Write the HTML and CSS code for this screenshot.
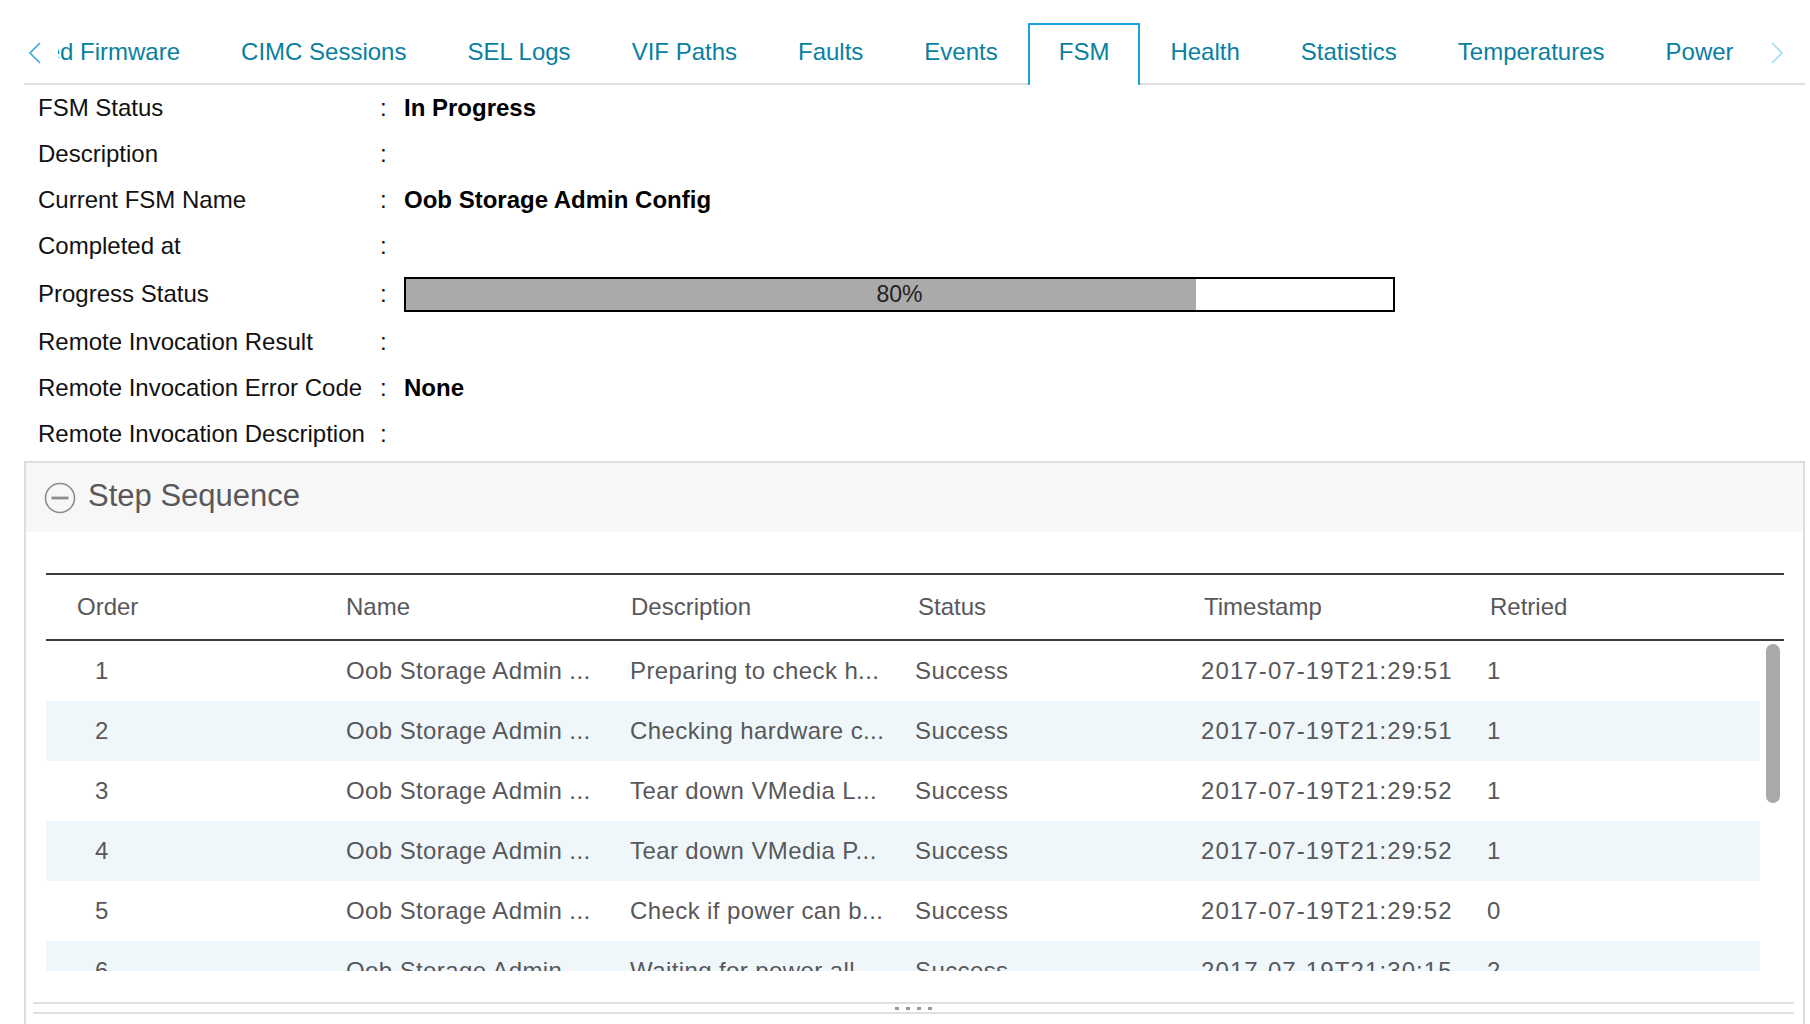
FILE: index.html
```html
<!DOCTYPE html>
<html lang="en">
<head>
<meta charset="utf-8">
<title>FSM</title>
<link rel="stylesheet" href="styles.css">
</head>
<body>
<div class="page">
  <nav class="tabbar">
    <span class="chev chev-left">
      <svg width="14" height="22" viewBox="0 0 14 22"><polyline points="12,1 2,11 12,21" fill="none" stroke="#35a8df" stroke-width="1.6"/></svg>
    </span>
    <div class="tab-scroll">
      <div class="tab-track">
        <a class="tab">Installed Firmware</a>
        <a class="tab">CIMC Sessions</a>
        <a class="tab">SEL Logs</a>
        <a class="tab">VIF Paths</a>
        <a class="tab">Faults</a>
        <a class="tab">Events</a>
        <a class="tab active">FSM</a>
        <a class="tab">Health</a>
        <a class="tab">Statistics</a>
        <a class="tab">Temperatures</a>
        <a class="tab">Power</a>
      </div>
    </div>
    <span class="chev chev-right">
      <svg width="14" height="22" viewBox="0 0 14 22"><polyline points="2,1 12,11 2,21" fill="none" stroke="#a6dbf4" stroke-width="1.6"/></svg>
    </span>
  </nav>

  <div class="fields">
    <div class="field"><span class="label">FSM Status</span><span class="colon">:</span><span class="value">In Progress</span></div>
    <div class="field"><span class="label">Description</span><span class="colon">:</span><span class="value"></span></div>
    <div class="field"><span class="label">Current FSM Name</span><span class="colon">:</span><span class="value">Oob Storage Admin Config</span></div>
    <div class="field"><span class="label">Completed at</span><span class="colon">:</span><span class="value"></span></div>
    <div class="field field-progress"><span class="label">Progress Status</span><span class="colon">:</span>
      <span class="value"><span class="progress"><span class="progress-fill" style="width:80%"></span><span class="progress-text">80%</span></span></span></div>
    <div class="field"><span class="label">Remote Invocation Result</span><span class="colon">:</span><span class="value"></span></div>
    <div class="field"><span class="label">Remote Invocation Error Code</span><span class="colon">:</span><span class="value">None</span></div>
    <div class="field"><span class="label">Remote Invocation Description</span><span class="colon">:</span><span class="value"></span></div>
  </div>

  <section class="panel">
    <header class="panel-head">
      <svg class="collapse-icon" width="32" height="32" viewBox="0 0 32 32"><circle cx="16" cy="16" r="14.5" fill="none" stroke="#8c8c8c" stroke-width="1.6"/><rect x="7.5" y="14.6" width="17" height="2.8" fill="#8c8c8c"/></svg>
      <h2 class="panel-title">Step Sequence</h2>
    </header>
    <div class="table-wrap">
      <div class="thead">
        <div class="cell">Order</div>
        <div class="cell">Name</div>
        <div class="cell">Description</div>
        <div class="cell">Status</div>
        <div class="cell">Timestamp</div>
        <div class="cell">Retried</div>
      </div>
      <div class="tbody">
        <div class="rows">
          <div class="row"><div class="cell c-order">1</div><div class="cell c-name">Oob Storage Admin ...</div><div class="cell c-desc">Preparing to check h...</div><div class="cell c-status">Success</div><div class="cell c-ts">2017-07-19T21:29:51</div><div class="cell c-ret">1</div></div>
          <div class="row"><div class="cell c-order">2</div><div class="cell c-name">Oob Storage Admin ...</div><div class="cell c-desc">Checking hardware c...</div><div class="cell c-status">Success</div><div class="cell c-ts">2017-07-19T21:29:51</div><div class="cell c-ret">1</div></div>
          <div class="row"><div class="cell c-order">3</div><div class="cell c-name">Oob Storage Admin ...</div><div class="cell c-desc">Tear down VMedia L...</div><div class="cell c-status">Success</div><div class="cell c-ts">2017-07-19T21:29:52</div><div class="cell c-ret">1</div></div>
          <div class="row"><div class="cell c-order">4</div><div class="cell c-name">Oob Storage Admin ...</div><div class="cell c-desc">Tear down VMedia P...</div><div class="cell c-status">Success</div><div class="cell c-ts">2017-07-19T21:29:52</div><div class="cell c-ret">1</div></div>
          <div class="row"><div class="cell c-order">5</div><div class="cell c-name">Oob Storage Admin ...</div><div class="cell c-desc">Check if power can b...</div><div class="cell c-status">Success</div><div class="cell c-ts">2017-07-19T21:29:52</div><div class="cell c-ret">0</div></div>
          <div class="row"><div class="cell c-order">6</div><div class="cell c-name">Oob Storage Admin ...</div><div class="cell c-desc">Waiting for power all...</div><div class="cell c-status">Success</div><div class="cell c-ts">2017-07-19T21:30:15</div><div class="cell c-ret">2</div></div>
        </div>
        <div class="vscroll"><div class="vthumb"></div></div>
      </div>
      <div class="resizer"><span class="dot"></span><span class="dot"></span><span class="dot"></span><span class="dot"></span></div>
    </div>
  </section>
</div>
</body>
</html>
```
FILE: styles.css
```css
html, body {
  margin: 0;
  padding: 0;
  background: #fff;
  overflow: hidden;
}
body {
  font-family: "Liberation Sans", Arial, Helvetica, sans-serif;
  color: #000;
}
.page {
  padding: 23px 5px 0 24px;
  height: 1001px;
}

/* Tabs */
.tabbar {
  display: flex;
  height: 62px;
  box-shadow: inset 0 -2px 0 #e0e0e0;
}
.chev {
  display: flex;
  align-items: flex-start;
  padding-top: 19px;
  box-sizing: border-box;
}
.chev-left {
  width: 34px;
  padding-left: 4px;
}
.chev-right {
  width: 40px;
  padding-left: 5px;
}
.tab-scroll {
  flex: 1;
  overflow: hidden;
  height: 62px;
}
.tab-track {
  display: flex;
  margin-left: -104.5px;
  height: 62px;
}
.tab {
  flex: none;
  display: flex;
  align-items: center;
  box-sizing: border-box;
  height: 62px;
  padding: 0 28.5px 6px;
  border: 2px solid transparent;
  border-bottom: 0;
  font-size: 24px;
  color: #0a7fa0;
  white-space: nowrap;
  text-decoration: none;
}
.tab.active {
  border-color: #1aa1dc;
  background: #fff;
}

/* Fields */
.fields {
  padding-left: 14px;
}
.field {
  display: grid;
  grid-template-columns: 342px 24px 1fr;
  align-items: center;
  height: 46px;
  font-size: 24px;
  color: #111;
}
.field-progress {
  height: 50px;
}
.value {
  font-weight: bold;
  color: #000;
}
.progress {
  position: relative;
  display: flex;
  width: 991px;
  height: 35px;
  box-sizing: border-box;
  border: 2.5px solid #000;
  background: #fff;
}
.progress-fill {
  display: block;
  height: 100%;
  background: #aaaaaa;
}
.progress-text {
  position: absolute;
  left: 0;
  right: 0;
  top: 0;
  bottom: 0;
  display: flex;
  align-items: center;
  justify-content: center;
  font-weight: normal;
  font-size: 23px;
  color: #222;
}

/* Panel */
.panel {
  margin-top: 4px;
  border: 2px solid #dedede;
  border-bottom: 0;
  height: 600px;
}
.panel-head {
  display: flex;
  align-items: center;
  height: 69px;
  padding: 0 0 3px 18px;
  box-sizing: border-box;
  background: #f7f7f7;
}
.collapse-icon {
  flex: none;
  margin-top: 3px;
}
.panel-title {
  margin: 0 0 0 12px;
  font-size: 31px;
  font-weight: normal;
  color: #58585b;
}
.table-wrap {
  padding: 41px 0 0 0;
}
.thead, .tbody {
  margin: 0 19px 0 20px;
}
.thead {
  display: grid;
  grid-template-columns: 269px 285px 287px 286px 286px 1fr;
  align-items: center;
  height: 64px;
  border-top: 2px solid #3c3c3e;
  border-bottom: 2px solid #3c3c3e;
  font-size: 24px;
  color: #58585b;
}
.thead .cell {
  padding-left: 31px;
}
.tbody {
  display: flex;
  height: 330px;
  overflow: hidden;
}
.rows {
  flex: 1;
}
.row {
  display: grid;
  grid-template-columns: 269px 285px 287px 286px 286px 1fr;
  align-items: center;
  height: 60px;
  font-size: 24px;
  letter-spacing: 0.4px;
  color: #58585b;
}
.row:nth-child(even) {
  background: #eff7fb;
}
.row .cell {
  padding-left: 28px;
  white-space: nowrap;
}
.row .c-order {
  padding-left: 49px;
}
.row .c-name {
  padding-left: 31px;
}
.row .c-desc {
  padding-left: 30px;
}
.row .c-ts {
  letter-spacing: 1.1px;
}
.vscroll {
  flex: none;
  width: 24px;
}
.vthumb {
  margin: 3px 4px 0 6px;
  height: 159px;
  border-radius: 7px;
  background: #a9a9a9;
}
.resizer {
  display: flex;
  justify-content: center;
  align-items: center;
  gap: 7px;
  margin: 31px 9px 0 7px;
  height: 8px;
  border-top: 2px solid #e0e0e0;
  border-bottom: 2px solid #e0e0e0;
}
.dot {
  width: 4px;
  height: 3px;
  background: #9a9a9a;
}
```
